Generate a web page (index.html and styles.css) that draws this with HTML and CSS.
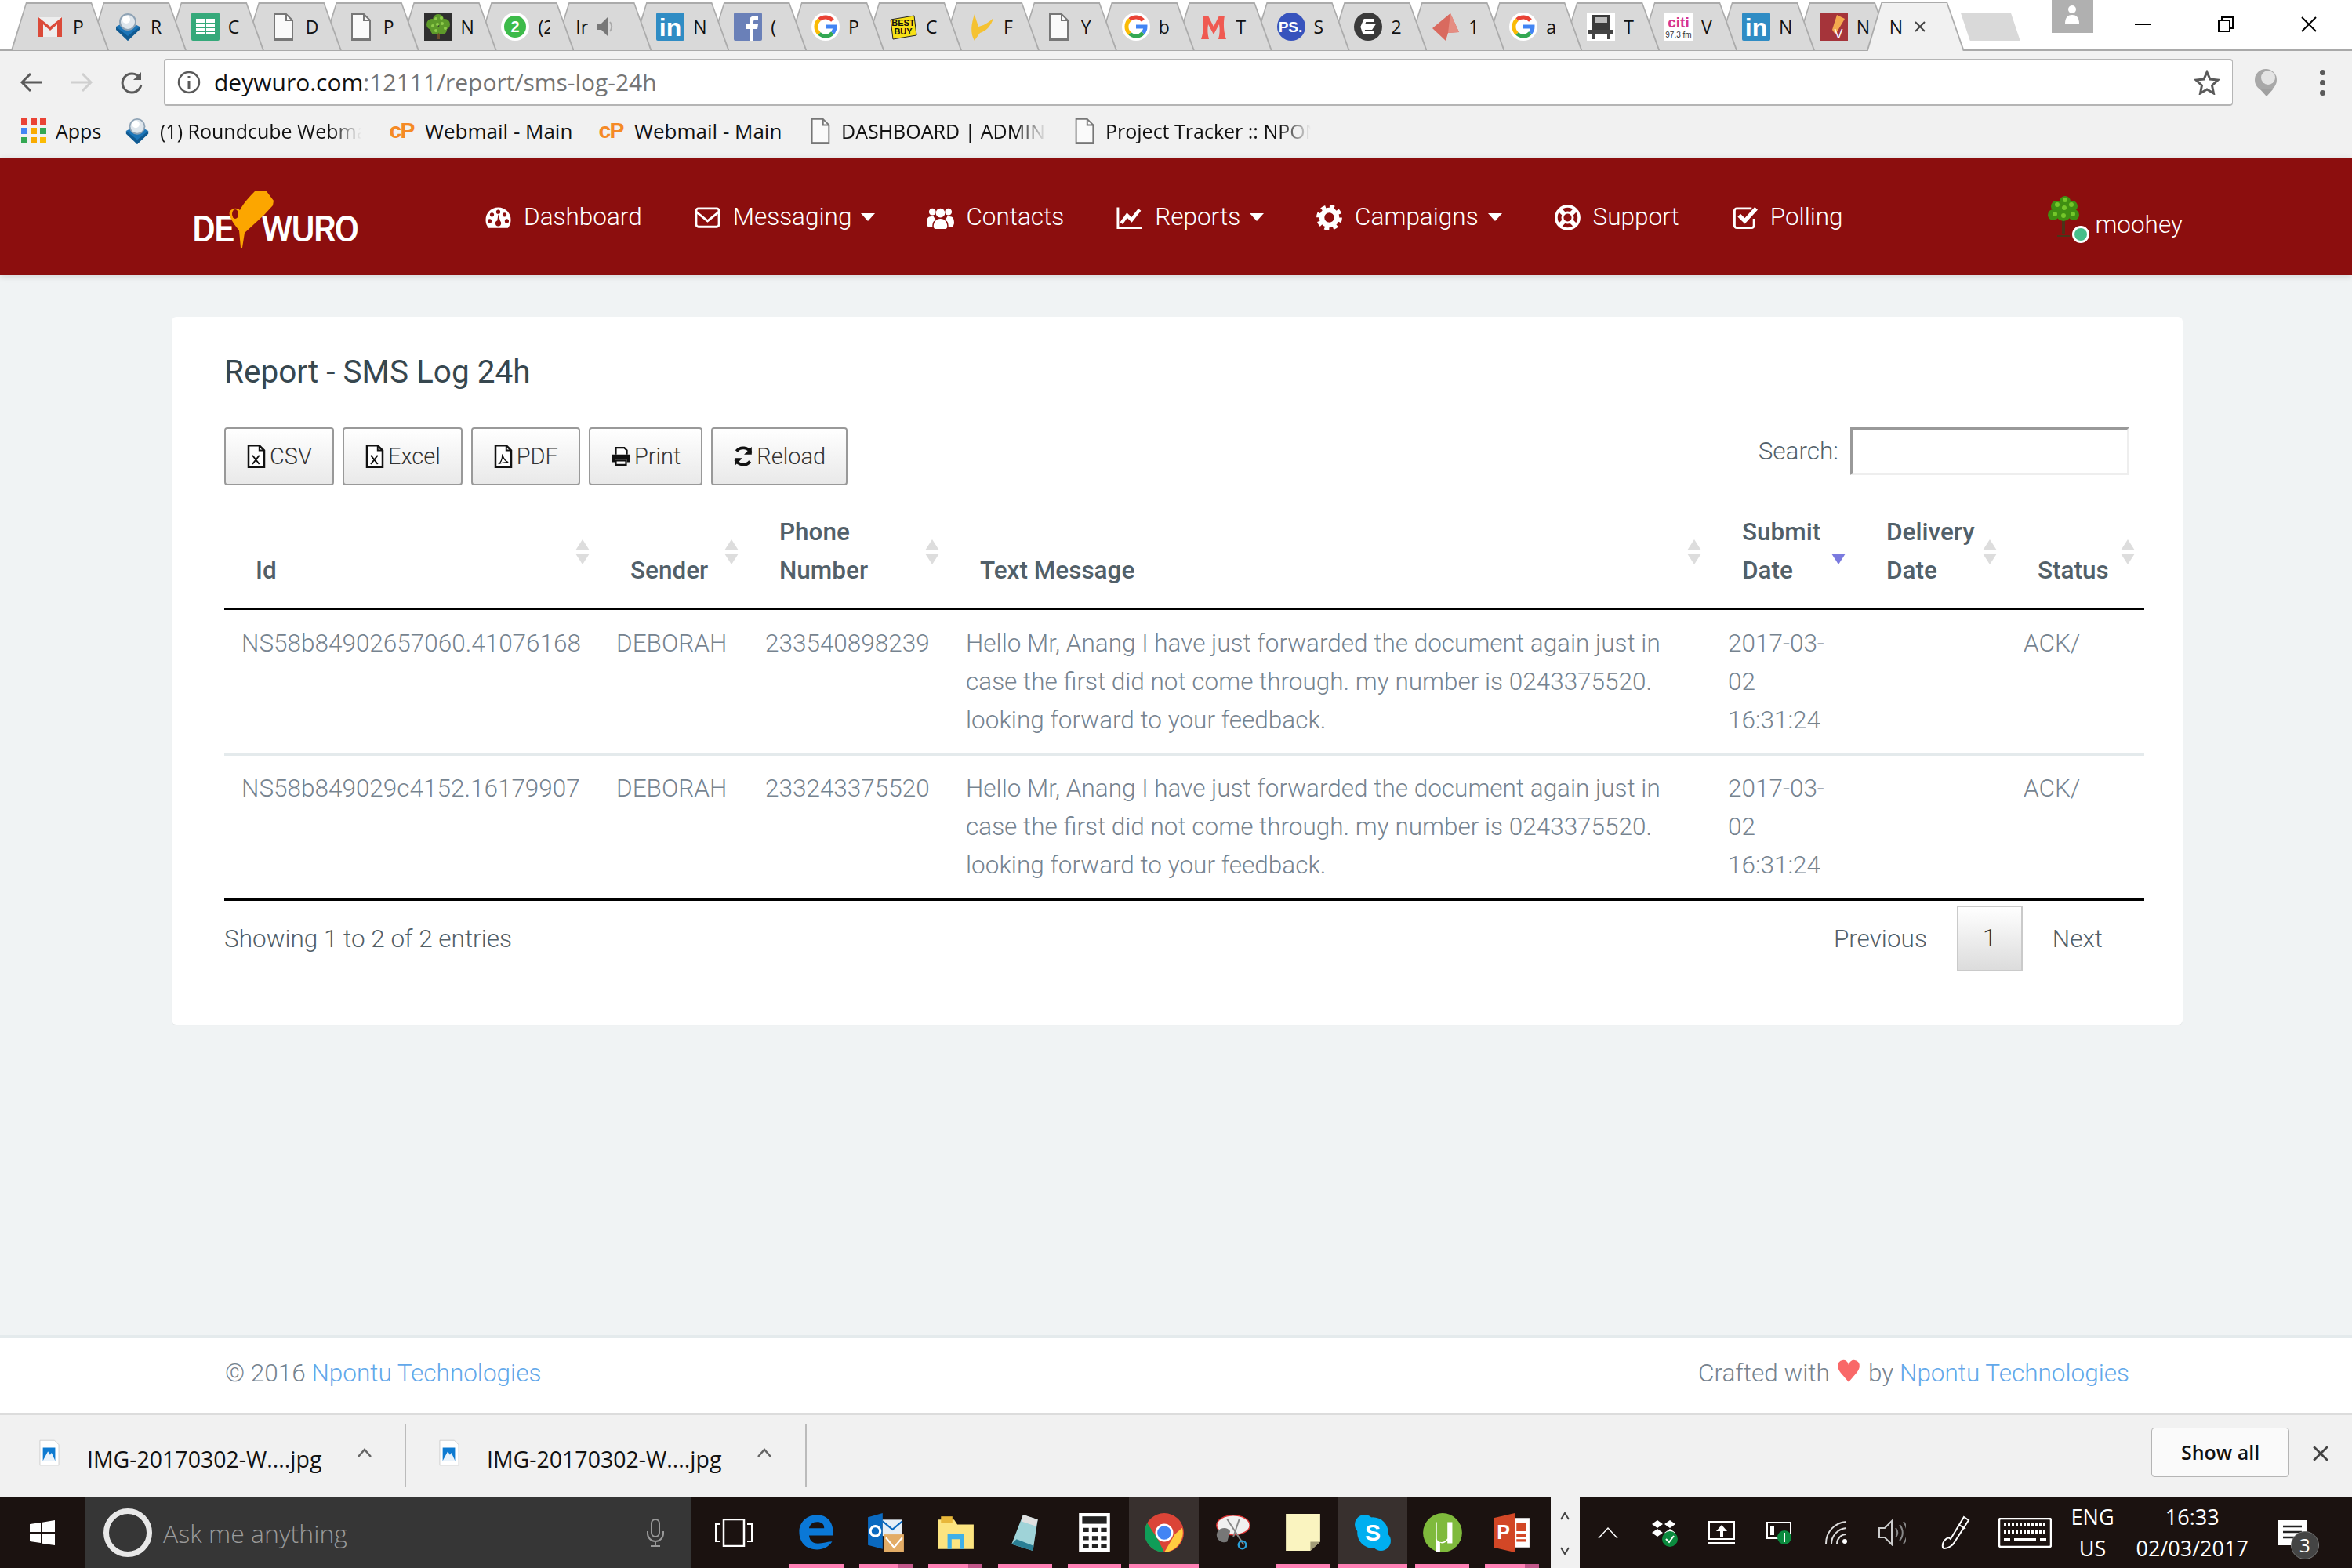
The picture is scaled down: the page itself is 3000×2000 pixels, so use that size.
FILE: index.html
```html
<!DOCTYPE html>
<html lang="en">
<head>
<meta charset="utf-8">
<title>Report - SMS Log 24h</title>
<link rel="stylesheet" href="styles.css">
</head>
<body>
<svg class="sprite" aria-hidden="true">
  <symbol id="f-gmail" viewBox="0 0 36 36"><rect x="3" y="6" width="30" height="25" fill="#eee"/><path d="M3 31V6l15 12L33 6v25h-6V15l-9 8-9-8v16z" fill="#db4a39"/></symbol>
  <symbol id="f-cube" viewBox="0 0 36 36"><path d="M3 18 18 10l15 8-15 18z" fill="#1c75b8"/><path d="M3 18l15 12 15-12v4L18 36 3 22z" fill="#105a92"/><circle cx="18" cy="12" r="11" fill="#8fa3b5"/><circle cx="18" cy="12" r="9" fill="#dfe6ec"/><circle cx="16" cy="9" r="5" fill="#fff"/></symbol>
  <symbol id="f-sheet" viewBox="0 0 36 36"><rect width="36" height="36" rx="2" fill="#35a97a"/><path d="M6 8h24v20H6z" fill="#fff"/><path d="M6 13h24v2H6zm0 5h24v2H6zm0 5h24v2H6zm11-15h2v20h-2z" fill="#35a97a"/></symbol>
  <symbol id="f-doc" viewBox="0 0 36 36"><path d="M7 2h15l8 8v25H7z" fill="#fafafa" stroke="#777" stroke-width="2"/><path d="M22 2v8h8" fill="none" stroke="#777" stroke-width="2"/><path d="M7 33h23v2H7z" fill="#777"/></symbol>
  <symbol id="f-tree" viewBox="0 0 36 36"><rect width="36" height="36" fill="#2f2f2f"/><path d="M16 20h4v14h-4z" fill="#6b4a2a"/><g fill="#5d9a2a"><circle cx="18" cy="9" r="7"/><circle cx="10" cy="15" r="7"/><circle cx="26" cy="15" r="7"/><circle cx="14" cy="22" r="6"/><circle cx="23" cy="22" r="6"/></g><g fill="#8fcb4b"><circle cx="15" cy="8" r="2"/><circle cx="22" cy="7" r="2"/><circle cx="23" cy="14" r="2"/><circle cx="11" cy="17" r="2"/><circle cx="17" cy="15" r="2"/><circle cx="27" cy="20" r="2"/><circle cx="15" cy="23" r="2"/></g></symbol>
  <symbol id="f-fb" viewBox="0 0 36 36"><rect width="36" height="36" rx="2" fill="#6a80b8"/><path d="M20 36V21h-5v-6h5v-4c0-5 3-7 7-7h4v5h-3c-2 0-3 1-3 3v3h6l-1 6h-5v15z" fill="#fff"/></symbol>
  <symbol id="f-g" viewBox="0 0 36 36"><circle cx="18" cy="18" r="18" fill="#fff"/><path d="M27 10a12 12 0 0 0-17-1" fill="none" stroke="#e94235" stroke-width="5"/><path d="M10 9a12 12 0 0 0 0 18" fill="none" stroke="#fabb05" stroke-width="5"/><path d="M10 27a12 12 0 0 0 17-1" fill="none" stroke="#34a853" stroke-width="5"/><path d="M27 26a12 12 0 0 0 3-8H18" fill="none" stroke="#4285f4" stroke-width="5"/></symbol>
  <symbol id="f-bird" viewBox="0 0 36 36"><path d="M10 36C4 26 6 14 10 2c2 8 4 12 5 16 5-1 12-4 19-11-3 11-10 17-17 19-2 3-5 6-7 10z" fill="#f5c231"/></symbol>
  <symbol id="f-m" viewBox="0 0 36 36"><path d="M2 34c3-8 4-20 2-30h7l7 14 7-14h7c-2 10-1 22 2 30H24c2-7 2-13 1-19l-7 13-7-13c-1 6-1 12 1 19z" fill="#f05a52"/></symbol>
  <symbol id="f-e" viewBox="0 0 36 36"><circle cx="18" cy="18" r="18" fill="#3a3a3a"/><path d="M26 10H14l-3 7h13l-2 3H11l2 6h13" fill="none" stroke="#fff" stroke-width="4"/></symbol>
  <symbol id="f-kite" viewBox="0 0 36 36"><path d="M1 20 24 1l11 24-14 1-3 10z" fill="#d96a5f"/><path d="M24 1l11 24-14 1z" fill="#e58d82"/></symbol>
  <symbol id="f-bus" viewBox="0 0 36 36"><rect width="36" height="36" fill="#fff"/><path d="M7 3h22v24H7z" fill="#3a3a3a"/><path d="M10 6h16v7H10z" fill="#bbb"/><path d="M2 22h32v6H2zM6 28h4v6H6zm20 0h4v6h-4z" fill="#444"/></symbol>
  <symbol id="f-dl" viewBox="0 0 28 36"><path d="M1 1h20l6 6v28H1z" fill="#fff" stroke="#ccc"/><path d="M5 11h17v18H5z" fill="#0d7ad1"/><path d="M5 29l7-13 3 5 2-3 5 11z" fill="#e8f2fb"/></symbol>
</svg>

<div class="browser">
  <div class="tabstrip">
    <div class="tab" style="z-index:24"><svg class="fav"><use href="#f-gmail"/></svg><span class="tab-t">P</span></div>
    <div class="tab" style="z-index:23"><svg class="fav"><use href="#f-cube"/></svg><span class="tab-t">R</span></div>
    <div class="tab" style="z-index:22"><svg class="fav"><use href="#f-sheet"/></svg><span class="tab-t">C</span></div>
    <div class="tab" style="z-index:21"><svg class="fav"><use href="#f-doc"/></svg><span class="tab-t">D</span></div>
    <div class="tab" style="z-index:20"><svg class="fav"><use href="#f-doc"/></svg><span class="tab-t">P</span></div>
    <div class="tab" style="z-index:19"><svg class="fav"><use href="#f-tree"/></svg><span class="tab-t">N</span></div>
    <div class="tab" style="z-index:18"><svg class="fav" viewBox="0 0 36 36"><circle cx="18" cy="18" r="18" fill="#fff"/><circle cx="18" cy="18" r="14" fill="#3dbb4a"/><text x="18" y="25" text-anchor="middle" class="svg-t" font-size="20" font-weight="700" fill="#fff">2</text></svg><span class="tab-t">(2</span></div>
    <div class="tab tab-audio" style="z-index:17"><span class="tab-t">Ir</span><svg class="speaker" viewBox="0 0 22 28"><path d="M1 10h6l8-8v24l-8-8H1z" fill="#777"/><path d="M18 8c3 4 3 8 0 12" fill="none" stroke="#aaa" stroke-width="2"/></svg></div>
    <div class="tab" style="z-index:16"><svg class="fav" viewBox="0 0 36 36"><rect width="36" height="36" rx="2" fill="#2f8cc4"/><text x="18" y="30" text-anchor="middle" class="svg-t" font-size="32" font-weight="700" fill="#fff">in</text></svg><span class="tab-t">N</span></div>
    <div class="tab" style="z-index:15"><svg class="fav"><use href="#f-fb"/></svg><span class="tab-t">(</span></div>
    <div class="tab" style="z-index:14"><svg class="fav"><use href="#f-g"/></svg><span class="tab-t">P</span></div>
    <div class="tab" style="z-index:13"><svg class="fav" viewBox="0 0 36 36"><path d="M2 9 32 4l3 25-30 5z" fill="#f7e017" stroke="#222"/><text x="18" y="17" text-anchor="middle" class="svg-t" font-size="11" font-weight="700" fill="#111">BEST</text><text x="18" y="28" text-anchor="middle" class="svg-t" font-size="11" font-weight="700" fill="#111">BUY</text></svg><span class="tab-t">C</span></div>
    <div class="tab" style="z-index:12"><svg class="fav"><use href="#f-bird"/></svg><span class="tab-t">F</span></div>
    <div class="tab" style="z-index:11"><svg class="fav"><use href="#f-doc"/></svg><span class="tab-t">Y</span></div>
    <div class="tab" style="z-index:10"><svg class="fav"><use href="#f-g"/></svg><span class="tab-t">b</span></div>
    <div class="tab" style="z-index:9"><svg class="fav"><use href="#f-m"/></svg><span class="tab-t">T</span></div>
    <div class="tab" style="z-index:8"><svg class="fav" viewBox="0 0 36 36"><circle cx="18" cy="18" r="18" fill="#3753bd"/><text x="17" y="25" text-anchor="middle" class="svg-t" font-size="19" font-weight="700" fill="#fff">PS.</text></svg><span class="tab-t">S</span></div>
    <div class="tab" style="z-index:7"><svg class="fav"><use href="#f-e"/></svg><span class="tab-t">2</span></div>
    <div class="tab" style="z-index:6"><svg class="fav"><use href="#f-kite"/></svg><span class="tab-t">1</span></div>
    <div class="tab" style="z-index:5"><svg class="fav"><use href="#f-g"/></svg><span class="tab-t">a</span></div>
    <div class="tab" style="z-index:4"><svg class="fav"><use href="#f-bus"/></svg><span class="tab-t">T</span></div>
    <div class="tab" style="z-index:3"><svg class="fav" viewBox="0 0 36 36"><rect width="36" height="36" fill="#fff"/><text x="18" y="19" text-anchor="middle" class="svg-t" font-size="19" font-weight="700" fill="#d6348f">citi</text><text x="18" y="32" text-anchor="middle" class="svg-t" font-size="10" fill="#333">97.3 fm</text></svg><span class="tab-t">V</span></div>
    <div class="tab" style="z-index:2"><svg class="fav" viewBox="0 0 36 36"><rect width="36" height="36" rx="2" fill="#2f8cc4"/><text x="18" y="30" text-anchor="middle" class="svg-t" font-size="32" font-weight="700" fill="#fff">in</text></svg><span class="tab-t">N</span></div>
    <div class="tab" style="z-index:1"><svg class="fav" viewBox="0 0 36 36"><rect width="36" height="36" fill="#a5343a"/><path d="M22 3l10 5-12 20-4-6z" fill="#f4a84e"/><text x="24" y="33" text-anchor="middle" class="svg-t" font-size="16" fill="#fff">V</text></svg><span class="tab-t">N</span></div>
    <div class="tab tab-active" style="z-index:30"><span class="tab-t">N</span><svg class="tab-x" viewBox="0 0 14 14"><path d="M1 1l12 12M13 1 1 13" stroke="#444" stroke-width="2"/></svg></div>
    <div class="newtab"></div>
    <div class="profile"><svg viewBox="0 0 24 26" width="24" height="26"><circle cx="12" cy="6" r="5" fill="#fff"/><path d="M3 24c0-8 4-11 9-11s9 3 9 11z" fill="#fff"/></svg></div>
    <div class="winbtns">
      <svg viewBox="0 0 20 20" width="20" height="20"><path d="M0 10h20" stroke="#000" stroke-width="2"/></svg>
      <svg viewBox="0 0 20 20" width="20" height="20"><path d="M1 5h14v14H1zM5 5V1h14v14h-4" fill="none" stroke="#000" stroke-width="2"/></svg>
      <svg viewBox="0 0 20 20" width="20" height="20"><path d="M1 1l18 18M19 1 1 19" stroke="#000" stroke-width="2"/></svg>
    </div>
  </div>

  <div class="toolbar">
    <svg class="tb-ico" viewBox="0 0 32 32"><path d="M30 16H5M15 5 4 16l11 11" fill="none" stroke="#5a5a5a" stroke-width="3"/></svg>
    <svg class="tb-ico" viewBox="0 0 32 32"><path d="M2 16h25M17 5l11 11-11 11" fill="none" stroke="#cfcfcf" stroke-width="3"/></svg>
    <svg class="tb-ico" viewBox="0 0 32 32"><path d="M26 10a12 12 0 1 0 2 9" fill="none" stroke="#5a5a5a" stroke-width="3"/><path d="M28 3v10H18z" fill="#5a5a5a"/></svg>
    <div class="omnibox">
      <svg class="info" viewBox="0 0 30 30"><circle cx="15" cy="15" r="13" fill="none" stroke="#5a5a5a" stroke-width="2.500"/><path d="M13.500 13h3v10h-3zm0-6h3v3h-3z" fill="#5a5a5a"/></svg>
      <div class="url"><span class="url-host">deywuro.com</span>:12111/report/sms-log-24h</div>
      <svg class="star" viewBox="0 0 32 32"><path d="M16 3l4 9 10 1-7.500 7 2 10L16 25l-8.500 5 2-10L2 13l10-1z" fill="none" stroke="#5a5a5a" stroke-width="3"/></svg>
    </div>
    <svg class="ext" viewBox="0 0 36 36"><circle cx="18" cy="15" r="14" fill="#a8a8a8"/><circle cx="21" cy="12" r="9" fill="#e4e4e4"/><path d="M10 26h18L19 36z" fill="#a0a0a0"/></svg>
    <div class="dots"><i></i><i></i><i></i></div>
  </div>

  <div class="bookmarks">
    <div class="bm bm-apps"><span class="grid9"><i class="r"></i><i class="r"></i><i class="r"></i><i class="b"></i><i class="o"></i><i class="g"></i><i class="g"></i><i class="o"></i><i class="y"></i></span><span>Apps</span></div>
    <div class="bm bm-cube"><svg class="bm-ico"><use href="#f-cube"/></svg><span class="bm-t fade">(1) Roundcube Webmail</span></div>
    <div class="bm bm-cp"><svg class="bm-ico" viewBox="0 0 36 36"><text x="18" y="28" text-anchor="middle" class="svg-t" font-size="30" font-weight="700" fill="#f58a26" letter-spacing="-2">cP</text></svg><span class="bm-t">Webmail - Main</span></div>
    <div class="bm bm-cp"><svg class="bm-ico" viewBox="0 0 36 36"><text x="18" y="28" text-anchor="middle" class="svg-t" font-size="30" font-weight="700" fill="#f58a26" letter-spacing="-2">cP</text></svg><span class="bm-t">Webmail - Main</span></div>
    <div class="bm bm-dash"><svg class="bm-ico"><use href="#f-doc"/></svg><span class="bm-t fade">DASHBOARD | ADMIN PANEL</span></div>
    <div class="bm bm-proj"><svg class="bm-ico"><use href="#f-doc"/></svg><span class="bm-t fade">Project Tracker :: NPONTU</span></div>
  </div>
</div>

<header class="nav">
  <div class="logo">
    <span class="logo-t">DE</span><svg class="pen" viewBox="0 0 57 72"><path d="M33 0h15l9 12-1 6-11 12L20 53l-3 19h-2l-2-22C5 40 -1 31 1 26c2-4 9-6 13-2 4-8 11-16 19-24z" fill="#fca600"/><ellipse cx="8" cy="29" rx="4" ry="6" fill="#8c0e0e"/></svg><span class="logo-t">WURO</span>
  </div>
  <nav class="menu">
    <a class="mi"><svg class="ni" viewBox="0 0 24 24"><path d="M12 3A11 11 0 0 0 1 14c0 3 1 5 2.500 7h17c1.500-2 2.500-4 2.500-7A11 11 0 0 0 12 3z" fill="#fff"/><g fill="#8c0e0e"><circle cx="12" cy="7" r="1.800"/><circle cx="6.500" cy="9.500" r="1.800"/><circle cx="17.500" cy="9.500" r="1.800"/><circle cx="4.500" cy="15" r="1.800"/><circle cx="19.500" cy="15" r="1.800"/><circle cx="12" cy="17" r="2.500"/><path d="M11 16l1-7 2 7z"/></g></svg>Dashboard</a>
    <a class="mi"><svg class="ni" viewBox="0 0 24 24"><rect x="2" y="4" width="20" height="16" rx="2" fill="none" stroke="#fff" stroke-width="2"/><path d="M2 7l10 8 10-8" fill="none" stroke="#fff" stroke-width="2"/></svg>Messaging<i class="caret"></i></a>
    <a class="mi"><svg class="ni" viewBox="0 0 24 24"><g fill="#fff"><circle cx="5" cy="7" r="3"/><circle cx="19" cy="7" r="3"/><circle cx="12" cy="8" r="4"/><path d="M0 17c0-4 1-6 4-6h2c1 2 2 3 2 3-2 1-3 2-3 6H1zm24 0c0-4-1-6-4-6h-2c-1 2-2 3-2 3 2 1 3 2 3 6h4zM6 20c0-4 2-7 6-7s6 3 6 7c0 1-1 2-2 2H8c-1 0-2-1-2-2z"/></g></svg>Contacts</a>
    <a class="mi"><svg class="ni" viewBox="0 0 24 24"><path d="M2 3v18h21" fill="none" stroke="#fff" stroke-width="2"/><path d="M5 17l5-7 4 4 7-9" fill="none" stroke="#fff" stroke-width="3"/></svg>Reports<i class="caret"></i></a>
    <a class="mi"><svg class="ni" viewBox="0 0 24 24"><circle cx="12" cy="12" r="6.500" fill="none" stroke="#fff" stroke-width="4.500"/><circle cx="12" cy="12" r="9.500" fill="none" stroke="#fff" stroke-width="3.500" stroke-dasharray="4 3.460"/></svg>Campaigns<i class="caret"></i></a>
    <a class="mi"><svg class="ni" viewBox="0 0 24 24"><circle cx="12" cy="12" r="10" fill="none" stroke="#fff" stroke-width="2.500"/><circle cx="12" cy="12" r="4.500" fill="none" stroke="#fff" stroke-width="2"/><path d="M5 5l4 4M19 5l-4 4M5 19l4-4M19 19l-4-4" stroke="#fff" stroke-width="4"/></svg>Support</a>
    <a class="mi"><svg class="ni" viewBox="0 0 24 24"><path d="M20 13v6a2 2 0 0 1-2 2H5a2 2 0 0 1-2-2V6a2 2 0 0 1 2-2h13" fill="none" stroke="#fff" stroke-width="2"/><path d="M7 10l5 5L22 4" fill="none" stroke="#fff" stroke-width="3.500"/></svg>Polling</a>
  </nav>
  <div class="user">
    <span class="avatar">
      <svg class="avatar-img" viewBox="0 0 44 52"><path d="M20 26h4v22h-4zM14 50h16v2H14z" fill="#4a3418"/><g fill="#3f8f12"><circle cx="24" cy="7" r="7"/><circle cx="13" cy="13" r="7"/><circle cx="33" cy="13" r="7"/><circle cx="9" cy="24" r="7"/><circle cx="35" cy="24" r="7"/><circle cx="22" cy="22" r="10"/></g><g fill="#74c62a"><circle cx="24" cy="5" r="3"/><circle cx="14" cy="11" r="3"/><circle cx="32" cy="11" r="3"/><circle cx="23" cy="15" r="3"/><circle cx="11" cy="23" r="3"/><circle cx="34" cy="23" r="3"/><circle cx="22" cy="25" r="3"/></g></svg>
      <i class="status-dot"></i>
    </span>
    <span class="uname">moohey</span>
  </div>
</header>

<main class="main">
  <section class="card">
    <h2 class="title">Report - SMS Log 24h</h2>
    <div class="tools">
      <div class="btns">
        <a class="dt-btn"><svg class="bi" viewBox="0 0 20 24"><path d="M2 1h11l5 5v17H2z" fill="#fff" stroke="#111" stroke-width="2"/><path d="M13 1v5h5" fill="none" stroke="#111" stroke-width="1.500"/><path d="M6 11l7 9m0-9-7 9" stroke="#111" stroke-width="1.600"/></svg>CSV</a>
        <a class="dt-btn"><svg class="bi" viewBox="0 0 20 24"><path d="M2 1h11l5 5v17H2z" fill="#fff" stroke="#111" stroke-width="2"/><path d="M13 1v5h5" fill="none" stroke="#111" stroke-width="1.500"/><path d="M6 11l7 9m0-9-7 9" stroke="#111" stroke-width="1.600"/></svg>Excel</a>
        <a class="dt-btn"><svg class="bi" viewBox="0 0 20 24"><path d="M2 1h11l5 5v17H2z" fill="#fff" stroke="#111" stroke-width="2"/><path d="M13 1v5h5" fill="none" stroke="#111" stroke-width="1.500"/><path d="M5 20c3-2 4-6 4-10 1 4 3 7 6 8-4 0-7 0-10 2z" fill="none" stroke="#111"/></svg>PDF</a>
        <a class="dt-btn"><svg class="bi" viewBox="0 0 24 24"><path d="M6 10V2h10l3 3v5" fill="#fff" stroke="#111" stroke-width="2"/><path d="M1 10h22v9h-4v-3H5v3H1z" fill="#111"/><path d="M6 17h12v5H6z" fill="#fff" stroke="#111" stroke-width="2"/></svg>Print</a>
        <a class="dt-btn"><svg class="bi" viewBox="0 0 24 24"><path d="M21 8A10 10 0 0 0 4 6" fill="none" stroke="#111" stroke-width="3.500"/><path d="M22 1v9h-9z" fill="#111"/><path d="M3 16a10 10 0 0 0 17 2" fill="none" stroke="#111" stroke-width="3.500"/><path d="M2 23v-9h9z" fill="#111"/></svg>Reload</a>
      </div>
      <label class="search"><span>Search:</span><input class="search-in" type="text"></label>
    </div>

    <table class="log">
      <colgroup>
        <col class="c-id"><col class="c-sender"><col class="c-phone"><col class="c-text"><col class="c-sub"><col class="c-del"><col class="c-stat">
      </colgroup>
      <thead>
        <tr>
          <th>Id<i class="sort"></i></th>
          <th>Sender<i class="sort"></i></th>
          <th>Phone Number<i class="sort"></i></th>
          <th>Text Message<i class="sort"></i></th>
          <th>Submit Date<i class="sort sort-desc"></i></th>
          <th>Delivery Date<i class="sort"></i></th>
          <th>Status<i class="sort"></i></th>
        </tr>
      </thead>
      <tbody>
        <tr>
          <td>NS58b84902657060.41076168</td>
          <td>DEBORAH</td>
          <td>233540898239</td>
          <td>Hello Mr, Anang I have just forwarded the document again just in case the first did not come through. my number is 0243375520. looking forward to your feedback.</td>
          <td>2017-03-02 16:31:24</td>
          <td></td>
          <td>ACK/</td>
        </tr>
        <tr>
          <td>NS58b849029c4152.16179907</td>
          <td>DEBORAH</td>
          <td>233243375520</td>
          <td>Hello Mr, Anang I have just forwarded the document again just in case the first did not come through. my number is 0243375520. looking forward to your feedback.</td>
          <td>2017-03-02 16:31:24</td>
          <td></td>
          <td>ACK/</td>
        </tr>
      </tbody>
    </table>

    <div class="tfoot">
      <div>Showing 1 to 2 of 2 entries</div>
      <div class="pager"><a>Previous</a><a class="cur">1</a><a>Next</a></div>
    </div>
  </section>
</main>

<footer class="foot">
  <div>© 2016 <a class="lnk">Npontu Technologies</a></div>
  <div class="crafted">Crafted with <svg class="heart" viewBox="0 0 24 24"><path d="M12 23C5 15 1 11 1 7a5.500 5.500 0 0 1 11-1.500A5.500 5.500 0 0 1 23 7c0 4-4 8-11 16z" fill="#f96868"/></svg> by <a class="lnk">Npontu Technologies</a></div>
</footer>

<div class="dlbar">
  <div class="chip"><svg class="dl-ico"><use href="#f-dl"/></svg><span class="dl-t">IMG-20170302-W....jpg</span><svg class="chev" viewBox="0 0 20 14"><path d="M2 12l8-9 8 9" fill="none" stroke="#666" stroke-width="2.500"/></svg></div>
  <div class="chip"><svg class="dl-ico"><use href="#f-dl"/></svg><span class="dl-t">IMG-20170302-W....jpg</span><svg class="chev" viewBox="0 0 20 14"><path d="M2 12l8-9 8 9" fill="none" stroke="#666" stroke-width="2.500"/></svg></div>
  <a class="showall">Show all</a>
  <svg class="dl-x" viewBox="0 0 20 20"><path d="M2 2l16 16M18 2 2 18" stroke="#444" stroke-width="2.500"/></svg>
</div>

<div class="taskbar">
  <div class="start"><svg viewBox="0 0 32 32" width="32" height="32"><path d="M0 5l14-2v12H0zm16-2.300L32 0v15H16zM0 17h14v12L0 27zm16 0h16v15l-16-2.300z" fill="#fff"/></svg></div>
  <div class="cortana">
    <span class="ring"></span>
    <span class="ask">Ask me anything</span>
    <svg class="mic" viewBox="0 0 24 36" width="24" height="36"><rect x="7" y="1" width="10" height="22" rx="5" fill="none" stroke="#999" stroke-width="2"/><path d="M2 16v3a10 10 0 0 0 20 0v-3M12 29v6M6 35h12" fill="none" stroke="#999" stroke-width="2"/></svg>
  </div>
  <div class="tv"><svg viewBox="0 0 48 36" width="48" height="36"><path d="M11 1h26v34H11z" fill="none" stroke="#fff" stroke-width="2.500"/><path d="M7 7H1v22h6M41 7h6v22h-6" fill="none" stroke="#fff" stroke-width="2"/></svg></div>
  <div class="apps">
    <div class="app pin"><svg class="tico" viewBox="0 0 44 44"><path d="M40 32c-4 6-10 9-17 9C11 41 3 33 3 21 3 10 12 2 23 2c11 0 18 8 18 19v4H14c1 7 5 9 10 9 6 0 11-2 16-2zM14 17h17c0-5-3-7-8-7-5 0-8 3-9 7z" fill="#0a78d7"/></svg></div>
    <div class="app pin half"><svg class="tico" viewBox="0 0 48 48"><path d="M20 0 2 5v34l18 5z" fill="#0a69c0"/><circle cx="11" cy="22" r="6" fill="none" stroke="#fff" stroke-width="3"/><path d="M20 8h24v20H20z" fill="#e6eef6"/><path d="M20 10l12 10 12-10" fill="none" stroke="#0a69c0" stroke-width="2"/><path d="M22 26h24v22H22z" fill="#e3ac66"/><path d="M24 30l10 12 10-12" fill="none" stroke="#fff" stroke-width="2"/></svg></div>
    <div class="app pin half"><svg class="tico" viewBox="0 0 48 48"><path d="M2 8h20l4 6h20v30H2z" fill="#fce480"/><path d="M6 4h14v8H6z" fill="#e8b73a"/><path d="M14 26h20v18h-5V32H19v12h-5z" fill="#3fb0e8"/></svg></div>
    <div class="app pin"><svg class="tico" viewBox="0 0 48 48"><path d="M8 38 22 2l18 6-6 38z" fill="#9fd3d8"/><path d="M22 2l18 6-2 8-18-6z" fill="#e0e0e0"/><path d="M8 38l26 8 1-6-21-8z" fill="#2a7f95"/></svg></div>
    <div class="app pin"><svg class="tico" viewBox="0 0 44 48"><rect x="3" y="0" width="38" height="48" fill="#fff"/><rect x="7" y="4" width="30" height="9" fill="#222"/><path d="M8 18h7v5H8zm11 0h7v5h-7zm11 0h7v5h-7zM8 28h7v5H8zm11 0h7v5h-7zm11 0h7v5h-7zM8 38h7v5H8zm11 0h7v5h-7zm11 0h7v5h-7z" fill="#222"/></svg></div>
    <div class="app pin act"><svg class="tico" viewBox="0 0 48 48"><circle cx="24" cy="24" r="24" fill="#db4437"/><path d="M24 48A24 24 0 0 1 3 12l13 20z" fill="#0f9d58"/><path d="M24 48 37 26l9-8a24 24 0 0 1-22 30z" fill="#ffcd40"/><circle cx="24" cy="24" r="11" fill="#fff"/><circle cx="24" cy="24" r="8.500" fill="#4285f4"/></svg></div>
    <div class="app"><svg class="tico" viewBox="0 0 52 48"><ellipse cx="26" cy="14" rx="22" ry="13" fill="#f0f0f0" stroke="#d33" stroke-width="1.500"/><path d="M4 26a10 10 0 0 1 18-4l-4 14a10 10 0 0 1-14-10z" fill="#777"/><path d="M18 6l22 34M34 6 26 30" stroke="#888" stroke-width="2"/><circle cx="38" cy="40" r="5" fill="none" stroke="#2a9fd8" stroke-width="2.500"/></svg></div>
    <div class="app pin"><svg class="tico" viewBox="0 0 48 48"><path d="M3 1h42v34L33 46H3z" fill="#faf4c0"/><path d="M33 46V35h12z" fill="#a29c78"/></svg></div>
    <div class="app pin act"><svg class="tico" viewBox="0 0 48 48"><circle cx="14" cy="14" r="12" fill="#00aff0"/><circle cx="34" cy="34" r="12" fill="#00aff0"/><circle cx="24" cy="24" r="19" fill="#00aff0"/><text x="24" y="34" text-anchor="middle" class="svg-t" font-size="29" font-weight="700" fill="#fff">S</text></svg></div>
    <div class="app pin"><svg class="tico tico-l" viewBox="0 0 48 54"><circle cx="24" cy="27" r="24" fill="#7fba3c"/><path d="M17 14v20c0 6 10 6 13 0V14h6v26h-6v-3c-3 3-7 4-9 2v12h-5V14z" fill="#fff"/></svg></div>
    <div class="app pin half"><svg class="tico" viewBox="0 0 48 48"><path d="M2 6 28 0v48L2 42z" fill="#d24726"/><path d="M28 6h18v36H28z" fill="#fff"/><path d="M30 12h12v10H30zm0 14h12v3H30zm0 6h12v3H30z" fill="#d24726"/><text x="14" y="32" text-anchor="middle" class="svg-t" font-size="24" font-weight="700" fill="#fff">P</text></svg></div>
  </div>
  <div class="scroller"><svg viewBox="0 0 14 12" width="14" height="12"><path d="M2 10l5-8 5 8" fill="none" stroke="#444" stroke-width="2"/></svg><svg viewBox="0 0 14 12" width="14" height="12"><path d="M2 2l5 8 5-8" fill="none" stroke="#444" stroke-width="2"/></svg></div>
  <div class="tray">
    <svg class="tr s-up" viewBox="0 0 28 16" width="28" height="16"><path d="M2 15 14 2l12 13" fill="none" stroke="#fff" stroke-width="1.500"/></svg>
    <svg class="tr s-db" viewBox="0 0 36 36" width="36" height="36"><path d="M9 2l7 5-7 5-7-5zm16 0 7 5-7 5-7-5zM9 13l7 5-7 5-7-5zm16 0 7 5-7 5-7-5z" fill="#fff"/><circle cx="25" cy="26" r="10" fill="#0b8a3e"/><path d="M20 26l4 4 6-8" fill="none" stroke="#fff" stroke-width="2"/></svg>
    <svg class="tr s-up2" viewBox="0 0 34 30" width="34" height="30"><path d="M1 1h32v22H1z" fill="none" stroke="#fff" stroke-width="2"/><path d="M17 5l7 8h-5v7h-4v-7h-5zM0 27h34v3H0z" fill="#fff"/></svg>
    <svg class="tr s-bat" viewBox="0 0 34 32" width="34" height="32"><path d="M1 3h30v20H1z" fill="none" stroke="#fff" stroke-width="2"/><path d="M5 7h5v12H5z" fill="#fff"/><circle cx="23" cy="22" r="9" fill="#0b8a3e"/><path d="M23 16v12" stroke="#fff" stroke-width="2"/></svg>
    <svg class="tr s-wifi" viewBox="0 0 32 32" width="32" height="32"><path d="M2 30C2 14 14 3 28 2M9 30c0-10 8-19 19-20M16 30c0-6 5-12 12-12" fill="none" stroke="#ddd" stroke-width="2"/><circle cx="26" cy="27" r="3" fill="#fff"/></svg>
    <svg class="tr s-vol" viewBox="0 0 36 34" width="36" height="34"><path d="M2 11h7l9-9v30l-9-9H2z" fill="none" stroke="#ccc" stroke-width="2"/><path d="M23 11c3 4 3 8 0 12M28 7c5 6 5 14 0 20M33 3c6 8 6 20 0 28" fill="none" stroke="#888" stroke-width="2"/></svg>
    <svg class="tr s-pen" viewBox="0 0 40 44" width="40" height="44"><path d="M30 2l6 4-18 28c-2 4-8 8-13 8-3 0-3-6 0-10 3-3 5-5 8-2z" fill="none" stroke="#fff" stroke-width="2"/><path d="M24 12l8 5" stroke="#fff" stroke-width="2"/></svg>
    <svg class="tr s-kb" viewBox="0 0 68 38" width="68" height="38"><rect x="1" y="1" width="66" height="36" rx="2" fill="none" stroke="#fff" stroke-width="2.500"/><path d="M7 9h54M7 18h54" stroke="#fff" stroke-width="4" stroke-dasharray="3 2"/><path d="M7 28h8m5 0h28m5 0h8" stroke="#fff" stroke-width="4"/></svg>
    <div class="lang"><span>ENG</span><span>US</span></div>
    <div class="clock"><span>16:33</span><span>02/03/2017</span></div>
    <div class="notif"><svg viewBox="0 0 36 32" width="36" height="32"><path d="M0 0h36v32H0z" fill="#fff"/><path d="M6 8h24M6 15h24M6 22h14" stroke="#222" stroke-width="2.500"/></svg><span class="notif-n">3</span></div>
  </div>
</div>
</body>
</html>
```

FILE: styles.css
```css
* { box-sizing: border-box; }
html { margin: 0; padding: 0; width: 3000px; height: 2000px; overflow: hidden; }
body {
  margin: 0;
  padding: 0;
  width: 3000px;
  height: 2000px;
  overflow: hidden;
  display: flex;
  flex-direction: column;
  background: #f0f3f4;
  font-family: Roboto, "Liberation Sans", sans-serif;
  font-weight: 300;
  font-size: 31.5px;
  line-height: 49px;
  color: #76838f;
}
.sprite { position: absolute; width: 0; height: 0; overflow: hidden; }
.svg-t { font-family: "Liberation Sans", sans-serif; }

/* browser chrome */
.browser { height: 201px; flex: none; background: #f1f1f1; font-family: "Open Sans", "Noto Sans", sans-serif; font-weight: 400; color: #111; }
.tabstrip { height: 65px; background: #fff; border-bottom: 2px solid #a9a9a9; display: flex; align-items: flex-end; padding-left: 14px; }
.tab { position: relative; flex: none; width: 125px; height: 61px; margin-right: -26.1px; margin-bottom: -1px; padding-left: 32px; display: flex; align-items: center; gap: 11px; background: #ababab; clip-path: polygon(0 100%, 19px 0, 103px 0, 125px 100%); overflow: hidden; }
.tab::before { content: ""; position: absolute; inset: 2px 0 0 0; background: #d9d9d9; clip-path: polygon(2px 100%, 20px 0, 102px 0, 123px 100%); z-index: -1; }
.fav { width: 36px; height: 36px; flex: none; }
.tab-t { font-size: 23px; line-height: 30px; white-space: nowrap; width: 16px; overflow: hidden; }
.tab-audio { padding-left: 28px; gap: 10px; }
.speaker { width: 22px; height: 28px; flex: none; }
.tab-active { margin-left: -7px; margin-right: -5px; gap: 16px; padding-left: 29px; height: 63px; margin-bottom: -2px; }
.tab-active::before { background: #f1f1f1; }
.tab-x { width: 14px; height: 14px; flex: none; }
.newtab { width: 76px; height: 36px; margin-bottom: 11px; flex: none; background: #d9d9d9; clip-path: polygon(0 0, 64px 0, 76px 100%, 12px 100%); }
.profile { align-self: flex-start; width: 53px; height: 42px; margin-left: 40px; background: #b0b0b0; display: flex; justify-content: center; align-items: flex-start; padding-top: 6px; flex: none; }
.winbtns { align-self: flex-start; margin-left: auto; display: flex; gap: 86px; padding: 21px 45px 0 0; }

.toolbar { height: 82px; display: flex; align-items: center; padding: 0 21px 2px 24px; }
.tb-ico { width: 32px; height: 32px; flex: none; margin-right: 32px; }
.tb-ico:nth-child(3) { margin-right: 25px; }
.omnibox { width: 2639px; height: 60px; flex: none; background: #fff; border: 1px solid #b5b5b5; border-top-width: 2px; border-bottom-width: 2px; border-radius: 4px; display: flex; align-items: center; padding: 0 16px 0 16px; }
.info { width: 30px; height: 30px; flex: none; }
.url { font-size: 30px; line-height: 40px; margin-left: 17px; color: #757575; flex: 1; }
.url-host { color: #111; }
.star { width: 32px; height: 32px; flex: none; }
.ext { width: 36px; height: 36px; margin-left: 24px; flex: none; }
.dots { margin-left: 51px; display: flex; flex-direction: column; gap: 6px; }
.dots i { display: block; width: 7px; height: 7px; border-radius: 50%; background: #5a5a5a; }

.bookmarks { height: 54px; display: flex; align-items: flex-start; padding: 2px 0 0 27px; font-size: 25px; line-height: 36px; color: #111; }
.bm { display: flex; align-items: center; gap: 12px; flex: none; white-space: nowrap; }
.bm-apps { width: 131px; }
.grid9 { display: grid; grid-template-columns: repeat(3, 8px); gap: 4px; width: 32px; }
.grid9 i { height: 8px; display: block; }
.grid9 .r { background: #ea4335; } .grid9 .b { background: #4285f4; } .grid9 .o { background: #f9ab00; } .grid9 .g { background: #34a853; } .grid9 .y { background: #fbbc04; }
.bm-ico { width: 34px; height: 34px; flex: none; }
.bm-t { overflow: hidden; display: block; }
.fade { -webkit-mask-image: linear-gradient(90deg, #000 85%, transparent); mask-image: linear-gradient(90deg, #000 85%, transparent); }
.bm-cube { width: 337px; } .bm-cube .bm-t { width: 257px; }
.bm-cp { width: 267px; font-size: 26px; gap: 13px; }
.bm-dash { width: 337px; gap: 10px; } .bm-dash .bm-t { width: 262px; }
.bm-proj { gap: 10px; } .bm-proj .bm-t { width: 262px; }

/* app nav */
.nav { flex: none; height: 150px; background: #8c0e0e; color: #fff; display: flex; box-shadow: 0 2px 8px rgba(0,0,0,.12); position: relative; padding-left: 245px; }
.logo { display: flex; align-items: flex-end; width: 373px; flex: none; height: 114px; font-family: Roboto, sans-serif; }
.logo-t { font-size: 46px; font-weight: 500; line-height: 46px; color: #fff; letter-spacing: -2px; }
.pen { width: 57px; height: 72px; flex: none; margin: 0 -16px -1px -5px; position: relative; }
.menu { display: flex; gap: 66px; align-items: flex-start; height: 100%; padding-top: 52px; }
.mi { display: flex; align-items: center; color: #fff; font-size: 31.5px; line-height: 48px; white-space: nowrap; }
.ni { width: 35px; height: 35px; flex: none; margin-right: 15px; }
.caret { display: block; width: 0; height: 0; border-left: 9px solid transparent; border-right: 9px solid transparent; border-top: 10px solid #fff; margin-left: 12px; }
.user { position: relative; display: flex; align-items: flex-start; margin-left: auto; margin-right: 216px; padding-top: 62px; }
.avatar { display: block; position: relative; width: 44px; height: 52px; margin-right: 18px; margin-top: -13px; }
.avatar-img { width: 44px; height: 52px; display: block; }
.status-dot { position: absolute; right: -11px; bottom: -8px; width: 22px; height: 22px; border-radius: 50%; background: #46be8a; border: 3px solid #fff; }
.uname { font-size: 31.5px; line-height: 48px; }

/* main */
.main { flex: 1; padding: 53px 216px 0 219px; min-height: 0; }
.card { background: #fff; border-radius: 6px; padding: 48px 50px 68px 67px; box-shadow: 0 1px 1px rgba(0,0,0,.05); }
.title { margin: 0 0 49px; font-size: 40.5px; line-height: 44px; font-weight: 400; color: #37474f; }
.tools { display: flex; justify-content: space-between; align-items: flex-start; height: 74px; }
.btns { display: flex; gap: 11px; }
.dt-btn { height: 74px; display: flex; align-items: center; justify-content: center; padding: 0 26px; border: 2px solid #999; border-radius: 4px; background: linear-gradient(#fff, #e9e9e9); color: #333; font-size: 29px; white-space: nowrap; }
.bi { width: 26px; height: 30px; flex: none; margin-right: 4px; }
.search { display: flex; align-items: center; gap: 15px; padding-right: 18px; height: 61px; color: #526069; }
.search-in { width: 356px; height: 61px; border: 3.500px solid; border-color: #999 #eee #eee #999; background: #fff; padding: 0; margin: 0; }

.log { margin-top: 21px; width: 2449px; border-collapse: collapse; table-layout: fixed; }
.c-id { width: 478px; } .c-sender { width: 190px; } .c-phone { width: 256px; } .c-text { width: 972px; }
.c-sub { width: 184px; } .c-del { width: 193px; } .c-stat { width: 176px; }
.log th { position: relative; text-align: left; vertical-align: bottom; font-weight: 500; color: #526069; padding: 14px 40px 23px 40px; border-bottom: 3px solid #000; }
.log td { vertical-align: top; padding: 17px 22px 18px; border-top: 3px solid #e4eaec; }
.log tbody tr:first-child td { border-top: 0; padding-top: 18px; }
.log tbody tr:last-child td { border-bottom: 3px solid #000; }
.log thead th { box-shadow: 0 1px 0 #e4eaec; }
.sort { position: absolute; top: 48px; right: 12px; width: 18px; height: 32px; display: block; }
.sort::before, .sort::after { content: ""; position: absolute; left: 0; width: 0; height: 0; border-left: 9px solid transparent; border-right: 9px solid transparent; }
.sort::before { top: 0; border-bottom: 14px solid #ddd; }
.sort::after { bottom: 0; border-top: 14px solid #ddd; }
.sort-desc::before { display: none; }
.sort-desc::after { border-top-color: #7a7adf; }

.tfoot { display: flex; justify-content: space-between; align-items: center; margin-top: 6px; height: 84px; color: #526069; }
.pager { display: flex; align-items: center; padding-right: 52px; }
.pager a { display: block; }
.pager .cur { width: 84px; height: 84px; line-height: 80px; text-align: center; margin: 0 38px; border: 2px solid #cacaca; background: linear-gradient(#fff, #dcdcdc); color: #333; }

/* footer */
.foot { flex: none; height: 99px; background: #fff; border-top: 3px solid #e4eaec; display: flex; justify-content: space-between; align-items: center; padding: 0 284px 6px 287px; }
.lnk { color: #62a8ea; }
.crafted { display: flex; align-items: center; white-space: pre; }
.heart { width: 34px; height: 30px; flex: none; margin-top: -4px; }

/* downloads */
.dlbar { flex: none; height: 108px; background: #f1f1f1; border-top: 3px solid #dcdcdc; display: flex; align-items: center; font-family: "Open Sans", sans-serif; font-weight: 400; font-size: 28.5px; color: #111; }
.chip { width: 518px; height: 81px; margin-top: -3px; flex: none; display: flex; align-items: center; padding-left: 50px; border-right: 2px solid #bbb; }
.chip + .chip { width: 511px; padding-left: 42px; }
.dl-ico { width: 26px; height: 34px; flex: none; margin-top: -6px; }
.dl-t { margin-left: 35px; width: 304px; white-space: nowrap; margin-top: 10px; line-height: 40px; }
.chev { width: 20px; height: 14px; margin-left: 40px; margin-top: -6px; flex: none; }
.showall { margin-left: auto; width: 176px; height: 63px; margin-top: -10px; display: flex; align-items: center; justify-content: center; background: #fafafa; border: 1px solid #b5b5b5; border-radius: 4px; font-size: 25px; font-weight: 600; }
.dl-x { width: 22px; height: 22px; margin: -8px 29px 0 29px; flex: none; }

/* taskbar */
.taskbar { flex: none; height: 90px; background: #1b1210; display: flex; font-family: "Open Sans", sans-serif; font-weight: 400; color: #fff; overflow: hidden; }
.start { width: 108px; display: flex; align-items: center; justify-content: center; flex: none; }
.cortana { width: 774px; background: #363636; display: flex; align-items: center; flex: none; padding-left: 24px; }
.ring { width: 62px; height: 62px; border: 7px solid #e8e8e8; border-radius: 50%; flex: none; }
.ask { font-size: 32px; color: #9a9a9a; margin-left: 14px; font-weight: 300; white-space: nowrap; }
.mic { margin-left: auto; margin-right: 34px; flex: none; }
.tv { width: 115px; display: flex; align-items: center; justify-content: center; flex: none; padding-right: 8px; }
.apps { display: flex; flex: none; }
.app { width: 88.700px; height: 90px; position: relative; display: flex; align-items: center; justify-content: center; }
.tico { width: 50px; height: 50px; }
.tico-l { height: 56px; }
.act { background: rgba(255,255,255,.13); }
.pin::after { content: ""; position: absolute; left: 10px; right: 10px; bottom: 0; height: 5px; background: #ff80b5; }
.half::before { content: ""; position: absolute; right: 10px; bottom: 0; width: 18px; height: 5px; background: #c2578a; z-index: 1; }
.act.pin::after { left: 0; right: 0; }
.scroller { width: 37px; background: #f1f1f1; flex: none; margin-left: 5px; display: flex; flex-direction: column; justify-content: space-between; align-items: center; padding: 18px 0 16px; }
.tray { flex: 1; display: flex; align-items: center; position: relative; }
.tr { flex: none; }
.s-up { margin-left: 22px; }
.s-db { margin-left: 40px; }
.s-up2 { margin-left: 38px; }
.s-bat { margin-left: 40px; }
.s-wifi { margin-left: 40px; }
.s-vol { margin-left: 36px; }
.s-pen { margin-left: 44px; }
.s-kb { margin-left: 34px; }
.lang, .clock { display: flex; flex-direction: column; align-items: center; font-size: 27px; line-height: 40px; }
.lang { margin-left: 25px; }
.clock { margin-left: 28px; }
.notif { position: relative; margin-left: 38px; width: 36px; height: 32px; flex: none; }
.notif svg { display: block; }
.notif-n { position: absolute; left: 16px; top: 14px; width: 36px; height: 36px; border-radius: 50%; background: #444; border: 1px solid #777; font-size: 24px; line-height: 34px; text-align: center; color: #fff; }
```
